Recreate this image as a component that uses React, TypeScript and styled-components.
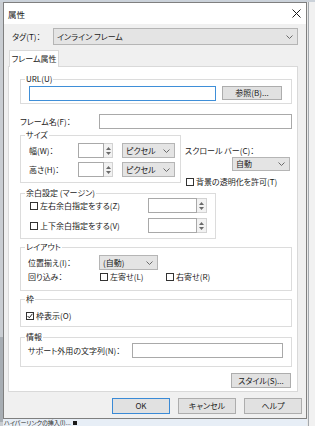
import React from "react";
import styled, { createGlobalStyle } from "styled-components";

const FONT = `"Noto Sans CJK JP", "Noto Sans", sans-serif`;

const GlobalStyle = createGlobalStyle`
  html, body { margin: 0; padding: 0; }
  body { width: 315px; height: 426px; overflow: hidden; background: #e4e8ed; }
`;

const Desktop = styled.div`
  display: grid;
  grid-template-columns: 3px 304px 1fr;
  grid-template-rows: 2px 417px 1fr;
  width: 315px;
  height: 426px;
  overflow: hidden;
  font-family: ${FONT};
  font-size: 8px;
  line-height: 10px;
  font-feature-settings: "palt";
  color: #1b1b1b;
`;

const TopStrip = styled.div`
  grid-column: 1 / -1;
  grid-row: 1;
  background: #cbd2da;
`;

const LeftStrip = styled.div`
  grid-column: 1;
  grid-row: 2 / -1;
  background: linear-gradient(to bottom, #c9cdd2 0 335px, #a7adb3 335px 420px, #c9cdd2 420px);
`;

const RightStrip = styled.div`
  grid-column: 3;
  grid-row: 2 / -1;
  background: linear-gradient(to right, #e9e9e9 0 1px, #a3a8ad 1px 2px, #f1f1f1 2px);
`;

const BottomBand = styled.div`
  grid-column: 2;
  grid-row: 3;
  background: #e7eef6;
  overflow: hidden;
  display: flex;
  align-items: center;
  gap: 2px;
  padding-left: 1px;
  font-size: 6px;
  line-height: 7px;
  color: #2a2a2a;
`;

const TinyBox = styled.span`
  width: 4px;
  height: 4px;
  background: #1a1a1a;
`;

const Dialog = styled.div`
  grid-column: 2;
  grid-row: 2;
  box-sizing: border-box;
  border: 1px solid #7f7f7f;
  background: #f0f0f0;
  display: flex;
  flex-direction: column;
`;

const TitleBar = styled.div`
  height: 21px;
  background: #ffffff;
  display: flex;
  align-items: center;
  justify-content: space-between;
  padding: 0 5px 0 4px;
  font-size: 8.5px;
`;

const Body = styled.div`
  flex: 1;
  display: flex;
  flex-direction: column;
  padding-top: 4px;
`;

const Row = styled.div<{ $gap?: number; $mt?: number; $h?: number }>`
  display: flex;
  align-items: ${(p) => (p.$h ? "center" : "flex-start")};
  gap: ${(p) => p.$gap ?? 0}px;
  margin-top: ${(p) => p.$mt ?? 0}px;
  height: ${(p) => (p.$h ? `${p.$h}px` : "auto")};
`;

const TagRow = styled.div`
  display: flex;
  align-items: center;
  height: 17px;
  padding-left: 8px;
`;

const Label = styled.span<{ $w?: number; $mt?: number }>`
  flex: none;
  width: ${(p) => (p.$w ? `${p.$w}px` : "auto")};
  margin-top: ${(p) => p.$mt ?? 0}px;
  white-space: nowrap;
  line-height: 10px;
`;

const Combo = styled.div<{ $w: number; $h: number; $ml?: number; $mt?: number }>`
  flex: none;
  box-sizing: border-box;
  width: ${(p) => p.$w}px;
  height: ${(p) => p.$h}px;
  margin-left: ${(p) => p.$ml ?? 0}px;
  margin-top: ${(p) => p.$mt ?? 0}px;
  border: 1px solid #b5b5b5;
  background: #e4e4e4;
  display: flex;
  align-items: center;
  justify-content: space-between;
  padding: 0 4px 0 3px;
  white-space: nowrap;
`;

const Edit = styled.div<{ $w?: number; $focus?: boolean }>`
  box-sizing: border-box;
  height: 15px;
  flex: ${(p) => (p.$w ? "none" : "1")};
  width: ${(p) => (p.$w ? `${p.$w}px` : "auto")};
  border: 1px solid ${(p) => (p.$focus ? "#3f8fd8" : "#a9a9a9")};
  background: #ffffff;
`;

const SpinBox = styled.div`
  display: flex;
  flex: none;
`;

const Spinner = styled.div<{ $w: number }>`
  box-sizing: border-box;
  width: ${(p) => p.$w}px;
  height: 15px;
  border: 1px solid #d2d2d2;
  border-left: none;
  background: #f2f2f2;
  display: flex;
  flex-direction: column;
  align-items: center;
  justify-content: center;
  gap: 2px;
`;

const PushButton = styled.div<{ $w: number; $h: number; $primary?: boolean }>`
  flex: none;
  box-sizing: border-box;
  width: ${(p) => p.$w}px;
  height: ${(p) => p.$h}px;
  border: 1px solid ${(p) => (p.$primary ? "#3a8ad6" : "#adadad")};
  background: #e1e1e1;
  display: flex;
  align-items: center;
  justify-content: center;
  white-space: nowrap;
`;

const TabStrip = styled.div`
  display: flex;
  margin-top: 5px;
  padding-left: 5px;
`;

const Tab = styled.div`
  position: relative;
  z-index: 1;
  box-sizing: border-box;
  width: 50px;
  height: 17px;
  margin-bottom: -1px;
  border: 1px solid #d9d9d9;
  border-bottom: none;
  background: #ffffff;
  display: flex;
  align-items: center;
  justify-content: center;
`;

const TabPage = styled.div`
  box-sizing: border-box;
  width: 290px;
  margin-left: 4px;
  border: 1px solid #d9d9d9;
  background: #ffffff;
  padding: 0 5px 3px 11px;
  display: flex;
  flex-direction: column;
`;

const Group = styled.fieldset<{ $w?: number; $mt: number }>`
  box-sizing: border-box;
  flex: none;
  width: ${(p) => (p.$w ? `${p.$w}px` : "100%")};
  min-width: 0;
  margin: ${(p) => p.$mt}px 0 0 0;
  padding: 0;
  border: 1px solid #dcdcdc;
`;

const Legend = styled.legend`
  margin-left: 4px;
  padding: 0 1px;
  font-size: 8px;
  line-height: 10px;
`;

const GroupBody = styled.div<{ $pt: number; $pb: number; $pl: number; $gap?: number }>`
  display: flex;
  flex-direction: column;
  gap: ${(p) => p.$gap ?? 0}px;
  padding: ${(p) => p.$pt}px 0 ${(p) => p.$pb}px ${(p) => p.$pl}px;
`;

const SideColumn = styled.div`
  display: flex;
  flex-direction: column;
  margin-left: 4px;
`;

const CheckItem = styled.div<{ $w?: number; $ml?: number; $mt?: number }>`
  flex: none;
  display: flex;
  align-items: center;
  gap: 2px;
  width: ${(p) => (p.$w ? `${p.$w}px` : "auto")};
  margin-left: ${(p) => p.$ml ?? 0}px;
  margin-top: ${(p) => p.$mt ?? 0}px;
  height: 10px;
  white-space: nowrap;
`;

const Box = styled.span`
  box-sizing: border-box;
  width: 8px;
  height: 8px;
  border: 1px solid #333333;
  background: #ffffff;
  display: flex;
  align-items: center;
  justify-content: center;
`;

const ButtonBar = styled.div`
  display: flex;
  justify-content: flex-end;
  gap: 8px;
  margin-top: 6px;
  padding-right: 4px;
`;

const StyleButtonWrap = styled.div`
  display: flex;
  justify-content: flex-end;
  margin-top: 6px;
  padding-right: 1px;
`;

const Chevron = () => (
  <svg width="7" height="4" viewBox="0 0 7 4">
    <polyline points="0.5,0.5 3.5,3.5 6.5,0.5" fill="none" stroke="#6a6a6a" strokeWidth="1" />
  </svg>
);

const CloseIcon = () => (
  <svg width="9" height="9" viewBox="0 0 9 9">
    <path d="M0.5 0.5 L8.5 8.5 M8.5 0.5 L0.5 8.5" stroke="#1a1a1a" strokeWidth="1" />
  </svg>
);

const Arrow = ({ up }: { up?: boolean }) => (
  <svg width="5" height="3" viewBox="0 0 5 3">
    <polygon points={up ? "0,3 2.5,0 5,3" : "0,0 2.5,3 5,0"} fill="#6a6a6a" />
  </svg>
);

const Check = ({ checked, label, w, ml, mt }: { checked?: boolean; label: string; w?: number; ml?: number; mt?: number }) => (
  <CheckItem $w={w} $ml={ml} $mt={mt}>
    <Box>
      {checked && (
        <svg width="6" height="6" viewBox="0 0 6 6">
          <polyline points="0.6,3 2.3,4.8 5.4,0.8" fill="none" stroke="#222" strokeWidth="1" />
        </svg>
      )}
    </Box>
    <span>{label}</span>
  </CheckItem>
);

const SpinEdit = ({ w, sw }: { w: number; sw: number }) => (
  <SpinBox>
    <Edit $w={w} />
    <Spinner $w={sw}>
      <Arrow up />
      <Arrow />
    </Spinner>
  </SpinBox>
);

const Select = ({ text, w, h, ml, mt }: { text: string; w: number; h: number; ml?: number; mt?: number }) => (
  <Combo $w={w} $h={h} $ml={ml} $mt={mt}>
    <span>{text}</span>
    <Chevron />
  </Combo>
);

export default function App() {
  return (
    <>
      <GlobalStyle />
      <Desktop>
        <TopStrip />
        <LeftStrip />
        <Dialog>
          <TitleBar>
            <span>属性</span>
            <CloseIcon />
          </TitleBar>
          <Body>
            <TagRow>
              <Label $w={41}>タグ(T)：</Label>
              <Select text="インライン フレーム" w={245} h={17} />
            </TagRow>

            <TabStrip>
              <Tab>フレーム属性</Tab>
            </TabStrip>
            <TabPage>
              <Group $mt={7}>
                <Legend>URL(U)</Legend>
                <GroupBody $pt={2} $pb={2} $pl={8}>
                  <Row $gap={6}>
                    <Edit $w={187} $focus />
                    <PushButton $w={60} $h={14}>参照(B)...</PushButton>
                  </Row>
                </GroupBody>
              </Group>

              <Row $mt={10} $h={15}>
                <Label $w={79}>フレーム名(F)：</Label>
                <Edit />
              </Row>

              <Row $mt={1}>
                <Group $w={161} $mt={0}>
                  <Legend>サイズ</Legend>
                  <GroupBody $pt={3} $pb={5} $pl={8} $gap={4}>
                    <Row $h={15}>
                      <Label $w={49}>幅(W)：</Label>
                      <SpinEdit w={26} sw={9} />
                      <Select text="ピクセル" w={53} h={15} ml={9} />
                    </Row>
                    <Row $h={15}>
                      <Label $w={49}>高さ(H)：</Label>
                      <SpinEdit w={26} sw={9} />
                      <Select text="ピクセル" w={53} h={15} ml={9} />
                    </Row>
                  </GroupBody>
                </Group>
                <SideColumn>
                  <Label $mt={16}>スクロール バー(C)：</Label>
                  <Select text="自動" w={58} h={14} ml={47} mt={1} />
                  <Check label="背景の透明化を許可(T)" ml={1} mt={6} />
                </SideColumn>
              </Row>

              <Group $w={196} $mt={1}>
                <Legend>余白設定 (マージン)</Legend>
                <GroupBody $pt={0} $pb={5} $pl={9} $gap={5}>
                  <Row $h={15}>
                    <Check label="左右余白指定をする(Z)" w={118} />
                    <SpinEdit w={49} sw={10} />
                  </Row>
                  <Row $h={15}>
                    <Check label="上下余白指定をする(V)" w={118} />
                    <SpinEdit w={49} sw={10} />
                  </Row>
                </GroupBody>
              </Group>

              <Group $mt={3}>
                <Legend>レイアウト</Legend>
                <GroupBody $pt={3} $pb={8} $pl={7} $gap={1}>
                  <Row $h={15}>
                    <Label $w={71}>位置揃え(I)：</Label>
                    <Select text="(自動)" w={59} h={15} />
                  </Row>
                  <Row $h={11}>
                    <Label $w={72}>回り込み：</Label>
                    <Check label="左寄せ(L)" w={66} />
                    <Check label="右寄せ(R)" />
                  </Row>
                </GroupBody>
              </Group>

              <Group $mt={3}>
                <Legend>枠</Legend>
                <GroupBody $pt={6} $pb={5} $pl={5}>
                  <Row $h={11}>
                    <Check label="枠表示(O)" checked />
                  </Row>
                </GroupBody>
              </Group>

              <Group $mt={5}>
                <Legend>情報</Legend>
                <GroupBody $pt={1} $pb={8} $pl={7}>
                  <Row $h={15}>
                    <Label $w={104}>サポート外用の文字列(N)：</Label>
                    <Edit $w={151} />
                  </Row>
                </GroupBody>
              </Group>

              <StyleButtonWrap>
                <PushButton $w={60} $h={15}>スタイル(S)...</PushButton>
              </StyleButtonWrap>
            </TabPage>

            <ButtonBar>
              <PushButton $w={58} $h={16} $primary>OK</PushButton>
              <PushButton $w={58} $h={16}>キャンセル</PushButton>
              <PushButton $w={58} $h={16}>ヘルプ</PushButton>
            </ButtonBar>
          </Body>
        </Dialog>
        <RightStrip />
        <BottomBand>
          <span>ハイパーリンクの挿入(I)...</span>
          <TinyBox />
        </BottomBand>
      </Desktop>
    </>
  );
}
